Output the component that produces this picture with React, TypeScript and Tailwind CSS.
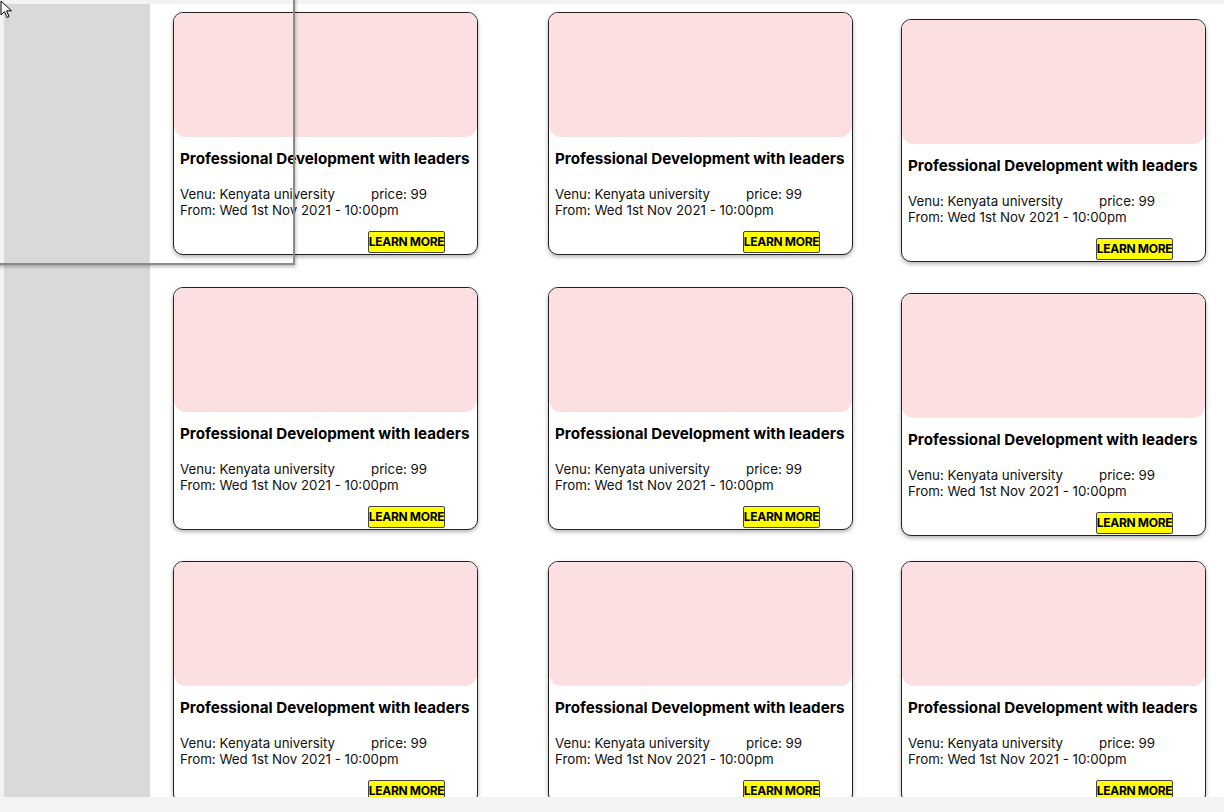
import React from "react";

function Card({ className = "" }: { className?: string }) {
  return (
    <div
      className={
        "w-[305px] h-[243px] shrink-0 rounded-[10px] border border-[#222] bg-white shadow-[0_2px_4px_rgba(0,0,0,0.3)] flex flex-col overflow-hidden " +
        className
      }
    >
      <div className="h-[124px] w-full bg-[#fcdfe0] rounded-b-[12px]" />
      <div className="pl-[6px] pt-[13px] text-[15.2px] leading-[18px] font-bold text-black whitespace-nowrap">
        Professional Development with leaders
      </div>
      <div className="pl-[6px] mt-[18px] text-[13.3px] leading-[16px] text-[#111] whitespace-nowrap">
        <div className="flex">
          <span className="w-[191px]">Venu: Kenyata university</span>
          <span>price: 99</span>
        </div>
        <div>From: Wed 1st Nov 2021 - 10:00pm</div>
      </div>
      <div className="mt-[13px] pl-[194px]">
        <div className="w-[77px] h-[22px] bg-[#ffff00] border border-[#444] rounded-[2px] flex items-center justify-center text-[12px] leading-none font-bold text-black tracking-[-0.3px] whitespace-nowrap">
          LEARN MORE
        </div>
      </div>
    </div>
  );
}

export default function App() {
  return (
    <div
      className="relative w-[1224px] h-[812px] overflow-hidden bg-[#f3f3f3]"
      style={{ fontFamily: "Inter, 'Noto Sans', sans-serif" }}
    >
      <div className="absolute left-0 top-0 w-full h-full flex pt-[4px] pl-[4px] pb-[15px]">
        <div className="w-[146px] h-full bg-[#d9d9d9] shrink-0" />
        <div className="flex-1 h-full bg-white flex overflow-hidden">
          <div className="ml-[23px] flex flex-col pt-[8px]">
            <Card />
            <Card className="mt-[32px]" />
            <Card className="mt-[31px]" />
          </div>
          <div className="ml-[70px] flex flex-col pt-[8px]">
            <Card />
            <Card className="mt-[32px]" />
            <Card className="mt-[31px]" />
          </div>
          <div className="ml-[48px] flex flex-col pt-[15px]">
            <Card />
            <Card className="mt-[31px]" />
            <Card className="mt-[25px]" />
          </div>
        </div>
      </div>

      {/* selection rectangle overlay */}
      <div className="absolute left-[-3px] top-[-3px] w-[298px] h-[268px] border-2 border-[#8a8a8a] shadow-[1px_2px_3px_rgba(0,0,0,0.25)] pointer-events-none" />

      {/* cursor */}
      <svg
        className="absolute left-0 top-0"
        width="14"
        height="20"
        viewBox="0 0 14 20"
      >
        <path
          d="M1 1 L1 15 L4.5 11.5 L7 17.5 L9 16.6 L6.6 10.8 L11.5 10.8 Z"
          fill="white"
          stroke="black"
          strokeWidth="1"
          strokeLinejoin="round"
        />
      </svg>
    </div>
  );
}
